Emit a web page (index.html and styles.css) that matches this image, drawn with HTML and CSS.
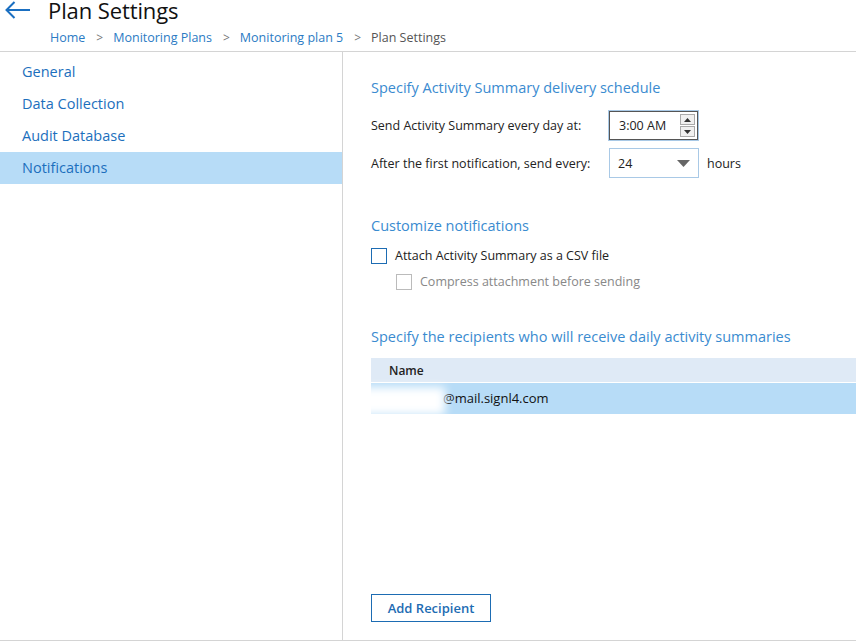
FILE: index.html
```html
<!DOCTYPE html>
<html>
<head>
<meta charset="utf-8">
<link rel="stylesheet" href="styles.css">
</head>
<body>
<div class="page">
  <header class="header">
    <div class="title-row">
      <svg class="back" width="26" height="18" viewBox="0 0 26 18"><path d="M1.5 9 H25 M9.5 1 L1.5 9 L9.5 17" fill="none" stroke="#1a6fc1" stroke-width="2"/></svg>
      <h1 class="title">Plan Settings</h1>
    </div>
    <nav class="crumbs">
      <a class="crumb">Home</a><span class="sep">&gt;</span>
      <a class="crumb">Monitoring Plans</a><span class="sep">&gt;</span>
      <a class="crumb">Monitoring plan 5</a><span class="sep">&gt;</span>
      <span class="crumb current">Plan Settings</span>
    </nav>
  </header>
  <div class="main">
    <aside class="sidebar">
      <div class="nav-item">General</div>
      <div class="nav-item">Data Collection</div>
      <div class="nav-item">Audit Database</div>
      <div class="nav-item active">Notifications</div>
    </aside>
    <section class="content">
      <h2 class="section-title first">Specify Activity Summary delivery schedule</h2>
      <div class="form-row row-time">
        <label class="label">Send Activity Summary every day at:</label>
        <div class="time-input">
          <span class="time-value">3:00 AM</span>
          <div class="spin">
            <span class="spin-btn"><svg width="7" height="4" viewBox="0 0 7 4"><path d="M0 4 L3.5 0 L7 4Z" fill="#333"/></svg></span>
            <span class="spin-btn"><svg width="7" height="4" viewBox="0 0 7 4"><path d="M0 0 L3.5 4 L7 0Z" fill="#333"/></svg></span>
          </div>
        </div>
      </div>
      <div class="form-row row-every">
        <label class="label">After the first notification, send every:</label>
        <div class="select">
          <span>24</span>
          <svg width="13" height="7" viewBox="0 0 13 7"><path d="M0 0 H13 L6.5 7Z" fill="#666"/></svg>
        </div>
        <span class="unit">hours</span>
      </div>

      <h2 class="section-title second">Customize notifications</h2>
      <div class="check-row">
        <span class="checkbox"></span>
        <span class="check-label">Attach Activity Summary as a CSV file</span>
      </div>
      <div class="check-row sub disabled">
        <span class="checkbox"></span>
        <span class="check-label">Compress attachment before sending</span>
      </div>

      <h2 class="section-title third">Specify the recipients who will receive daily activity summaries</h2>
      <div class="table">
        <div class="thead">Name</div>
        <div class="trow selected"><span class="email">@mail.signl4.com</span><span class="redact"></span></div>
      </div>
      <div class="spacer"></div>
      <button class="btn">Add Recipient</button>
    </section>
  </div>
</div>
</body>
</html>
```
FILE: styles.css
```css
* { box-sizing: border-box; }
html, body { margin: 0; padding: 0; background: #fff; }
body {
  font-family: "Open Sans", "Noto Sans", sans-serif;
  color: #222;
  width: 856px;
  height: 644px;
  overflow: hidden;
}
.page { display: flex; flex-direction: column; height: 641px; }

.header {
  height: 52px;
  border-bottom: 1px solid #d4d4d4;
  flex: none;
}
.title-row {
  display: flex;
  align-items: center;
  height: 20px;
}
.back { margin-left: 5px; margin-right: 17px; }
.title {
  margin: 0;
  font-weight: 400;
  font-size: 22px;
  line-height: 20px;
  color: #111;
  letter-spacing: -0.1px;
}
.crumbs {
  display: flex;
  align-items: center;
  margin-top: 9px;
  padding-left: 50px;
  font-size: 12.5px;
  line-height: 18px;
}
.crumb { color: #2b7bc4; text-decoration: none; }
.crumb.current { color: #555; }
.sep { color: #777; margin: 0 10px 0 11px; font-size: 12px; }

.main {
  flex: 1;
  display: flex;
  border-bottom: 1px solid #d4d4d4;
}
.sidebar {
  width: 343px;
  flex: none;
  border-right: 1px solid #d4d4d4;
  padding-top: 4px;
}
.nav-item {
  height: 32px;
  line-height: 32px;
  padding-left: 22px;
  font-size: 14.5px;
  color: #1c6fbd;
}
.nav-item.active { background: #b7dcf7; }

.content {
  flex: 1;
  display: flex;
  flex-direction: column;
  padding-left: 28px;
  padding-bottom: 18px;
  min-width: 0;
}
.section-title {
  margin: 0;
  font-weight: 400;
  font-size: 14.5px;
  line-height: 20px;
  color: #3a8bd0;
}
.section-title.first { margin-top: 26px; }
.section-title.second { margin-top: 38px; }
.section-title.third { margin-top: 37px; }

.form-row { display: flex; align-items: center; }
.row-time { margin-top: 13px; }
.row-every { margin-top: 8px; }
.label { width: 238px; font-size: 12.5px; }

.time-input {
  width: 89px;
  height: 29px;
  border: 1px solid #555;
  box-shadow: 0 0 0 1px #a9c9e6;
  display: flex;
  align-items: center;
  padding-left: 9px;
  font-size: 12.5px;
}
.time-value { flex: 1; }
.spin {
  display: flex;
  flex-direction: column;
  gap: 1px;
  margin-right: 2px;
}
.spin-btn {
  width: 15px;
  height: 11px;
  border: 1px solid #aaa;
  background: #f0f0f0;
  display: flex;
  align-items: center;
  justify-content: center;
}

.select {
  width: 90px;
  height: 30px;
  border: 1px solid #a9c9e6;
  display: flex;
  align-items: center;
  justify-content: space-between;
  padding: 0 8px 0 8px;
  font-size: 12.5px;
}
.unit { margin-left: 8px; font-size: 12.5px; }

.check-row { display: flex; align-items: center; margin-top: 11px; font-size: 12.5px; }
.check-row + .check-row { margin-top: 9px; }
.checkbox {
  width: 16px;
  height: 16px;
  border: 1px solid #1d6cb3;
  margin-right: 8px;
  flex: none;
}
.check-row.sub { padding-left: 25px; }
.check-row.disabled .checkbox { border-color: #bbb; }
.check-row.disabled .check-label { color: #888; }

.table { margin-top: 11px; }
.thead {
  height: 25px;
  line-height: 25px;
  background: #dfeaf6;
  padding-left: 18px;
  font-size: 12px;
  font-weight: 600;
  border-bottom: 1px solid #fff;
}
.trow {
  height: 31px;
  line-height: 31px;
  font-size: 13px;
  position: relative;
}
.trow.selected { background: #b7dcf7; }
.email { padding-left: 72px; color: #111; }
.redact {
  position: absolute;
  left: -18px;
  top: 4px;
  width: 92px;
  height: 28px;
  background: #fff;
  filter: blur(5px);
}
.spacer { flex: 1; }
.btn {
  align-self: flex-start;
  width: 120px;
  height: 28px;
  background: #fff;
  border: 1.5px solid #1d6cb3;
  color: #1d6cb3;
  font-family: inherit;
  font-size: 13px;
  font-weight: 600;
  padding: 0;
}
```
